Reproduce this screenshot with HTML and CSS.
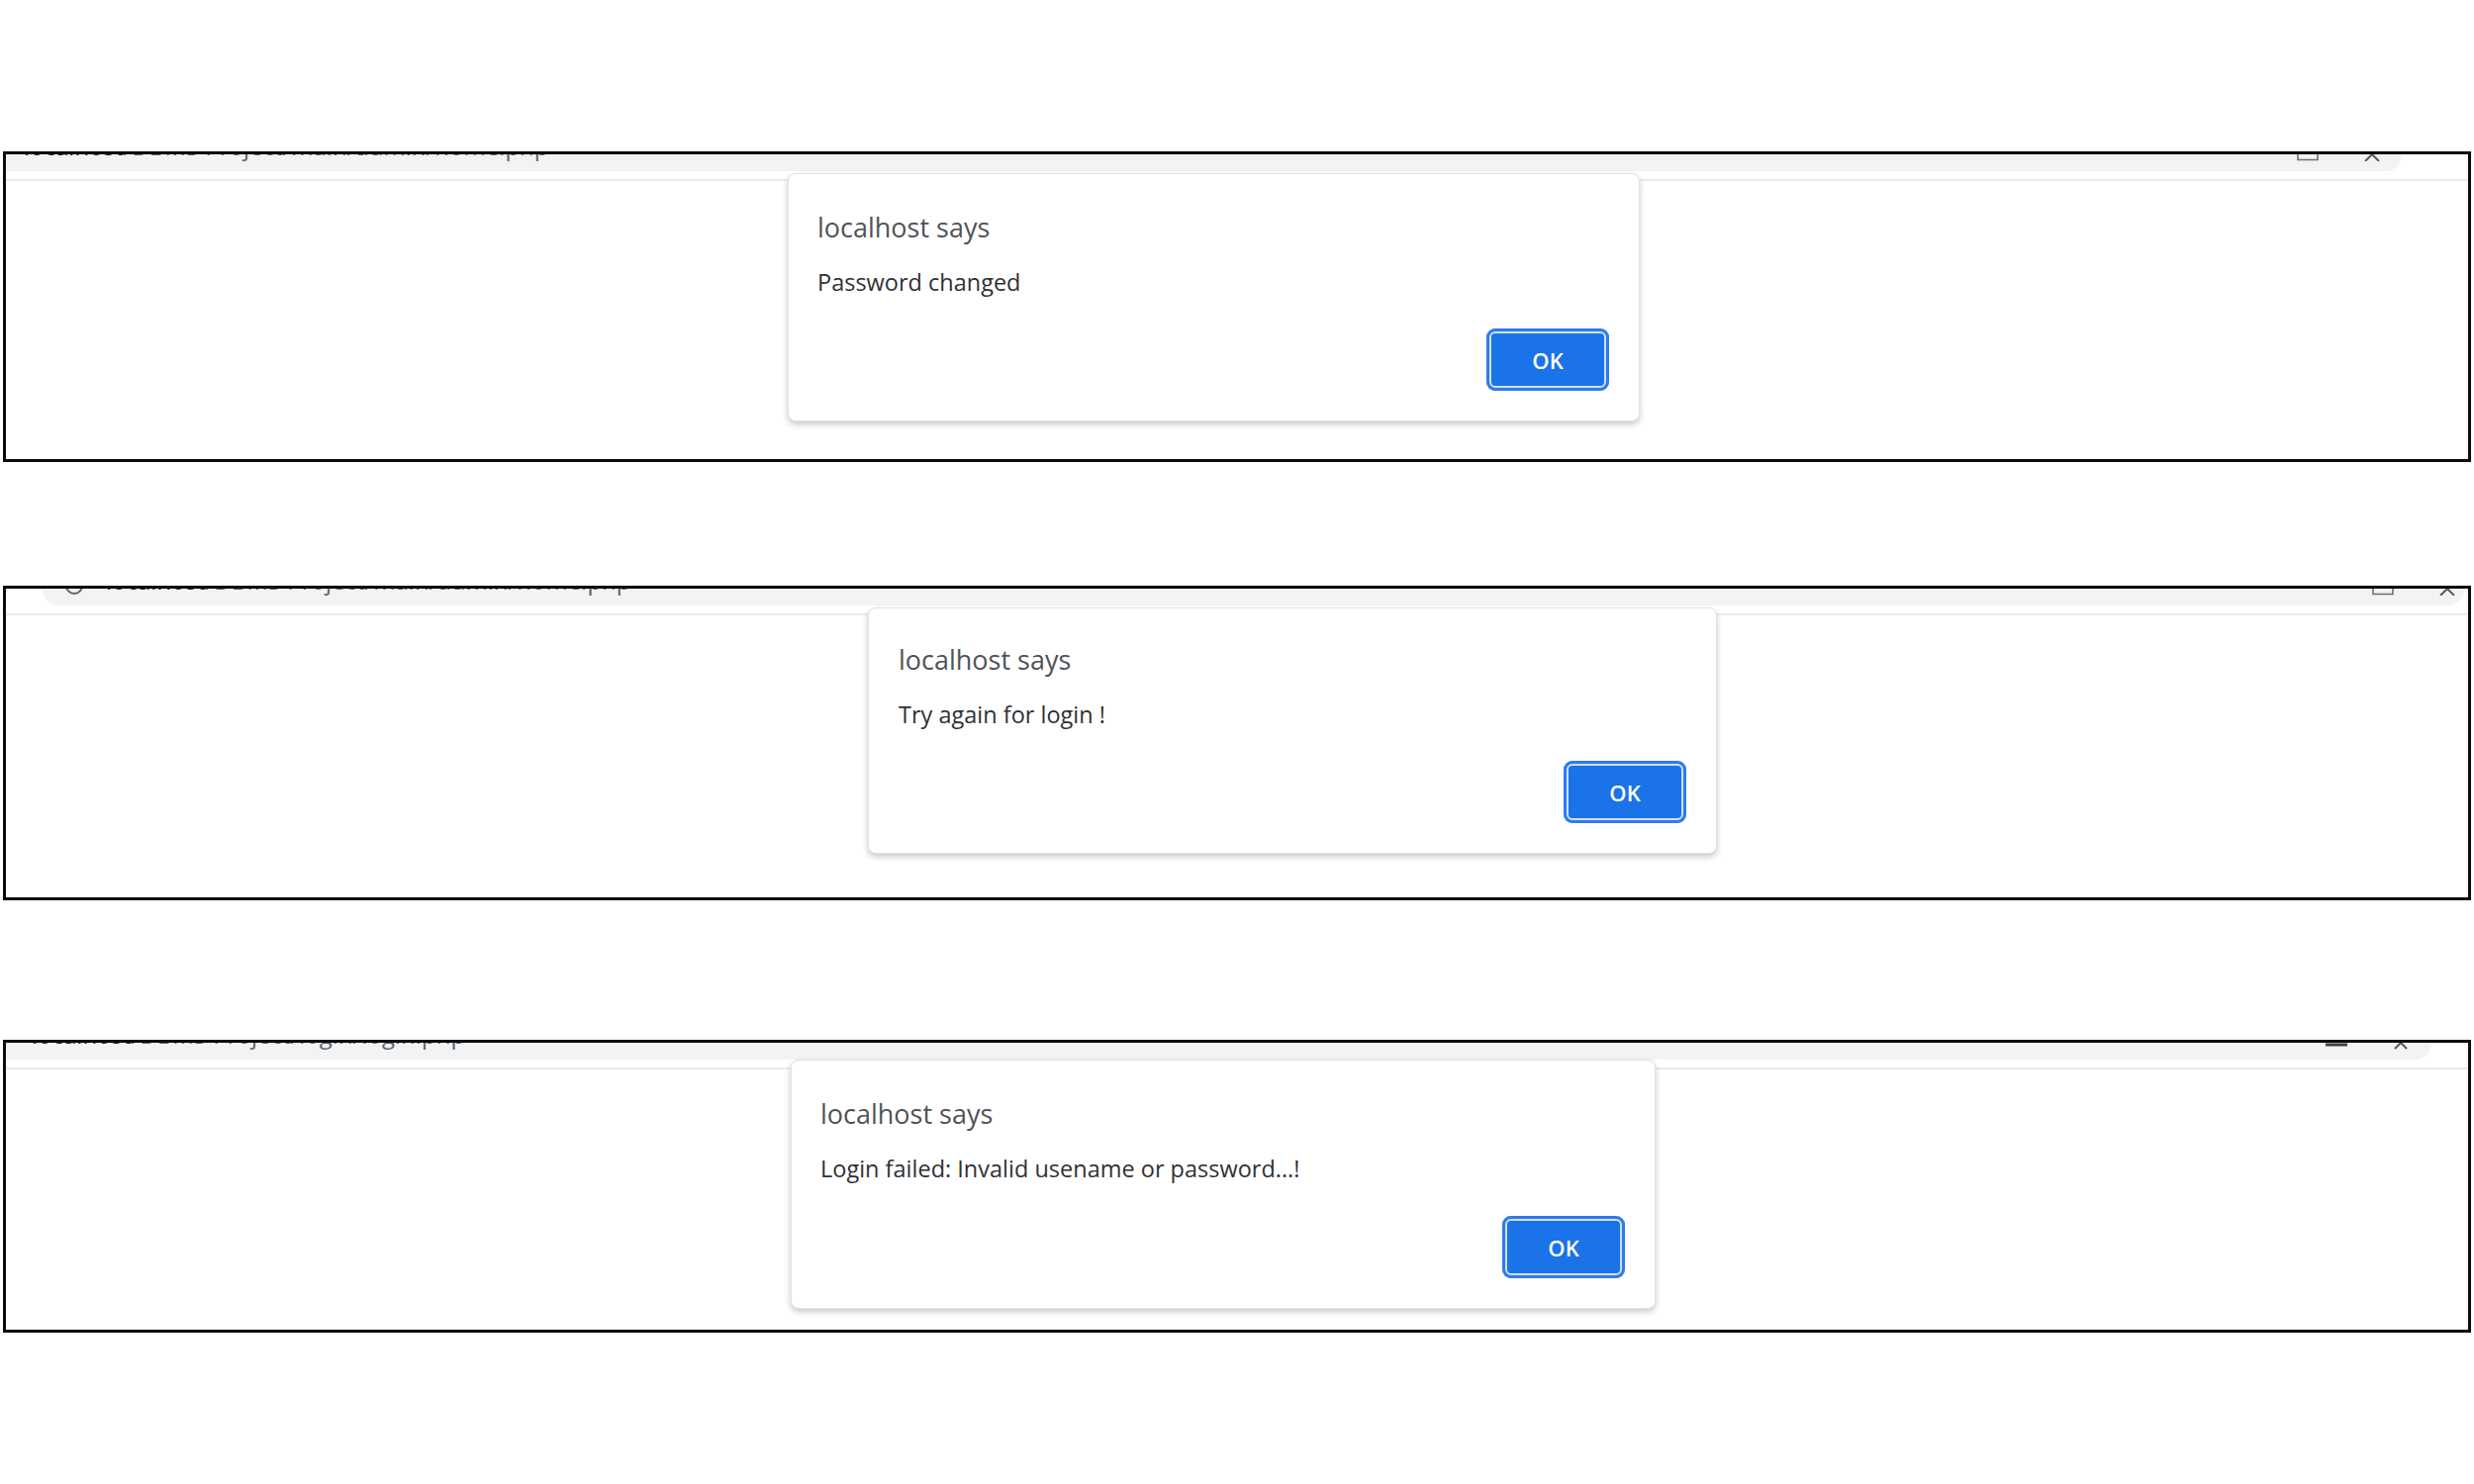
FILE: index.html
```html
<!DOCTYPE html>
<html lang="en">
<head>
    <meta charset="UTF-8">
    <meta name="viewport" content="width=device-width, initial-scale=1.0">
    <title>Alerts</title>
    <link rel="stylesheet" href="styles.css">
</head>
<body>
    <main class="sheet">
        <!-- first capture: password changed -->
        <section class="shot shot-one">
            <div class="toolbar">
                <div class="omnibox">
                    <span class="url"><span class="host">localhost</span>/DBMS Project/main/admin/home.php</span>
                    <span class="controls">
                        <svg class="ctl" width="22" height="7" viewBox="0 0 22 7"><path d="M1 0V5.5H21V0" fill="none" stroke="#6b6f73" stroke-width="1.6"/></svg>
                        <svg class="ctl" width="20" height="7" viewBox="0 0 20 7"><path d="M10 0L3 7M10 0L17 7" fill="none" stroke="#55595d" stroke-width="2"/></svg>
                    </span>
                </div>
            </div>
            <div class="dialog">
                <p class="dialog-title">localhost says</p>
                <p class="dialog-msg">Password changed</p>
                <div class="dialog-actions"><button class="ok">OK</button></div>
            </div>
        </section>

        <!-- second capture: try again -->
        <section class="shot shot-two">
            <div class="toolbar">
                <div class="omnibox">
                    <svg class="info" width="20" height="7" viewBox="0 0 20 7"><circle cx="10" cy="-3" r="8" fill="none" stroke="#5f6368" stroke-width="2"/></svg>
                    <span class="url"><span class="host">localhost</span>/DBMS Project/main/admin/home.php</span>
                    <span class="controls">
                        <svg class="ctl" width="22" height="7" viewBox="0 0 22 7"><path d="M1 0V5.5H21V0" fill="none" stroke="#6b6f73" stroke-width="1.6"/></svg>
                        <svg class="ctl" width="20" height="7" viewBox="0 0 20 7"><path d="M10 0L3 7M10 0L17 7" fill="none" stroke="#55595d" stroke-width="2"/></svg>
                    </span>
                </div>
            </div>
            <div class="dialog">
                <p class="dialog-title">localhost says</p>
                <p class="dialog-msg">Try again for login !</p>
                <div class="dialog-actions"><button class="ok">OK</button></div>
            </div>
        </section>

        <!-- third capture: login failed -->
        <section class="shot shot-three">
            <div class="toolbar">
                <div class="omnibox">
                    <span class="url"><span class="host">localhost</span>/DBMS Project/login/login.php</span>
                    <span class="controls">
                        <svg class="ctl" width="24" height="7" viewBox="0 0 24 7"><path d="M1 2H23" fill="none" stroke="#3c4043" stroke-width="3"/></svg>
                        <svg class="ctl" width="18" height="7" viewBox="0 0 18 7"><path d="M9 0L3 6M9 0L15 6" fill="none" stroke="#55595d" stroke-width="2"/></svg>
                    </span>
                </div>
            </div>
            <div class="dialog">
                <p class="dialog-title">localhost says</p>
                <p class="dialog-msg">Login failed: Invalid usename or password...!</p>
                <div class="dialog-actions"><button class="ok">OK</button></div>
            </div>
        </section>
    </main>
</body>
</html>
```

FILE: styles.css
```css
body {
    margin: 0;
    background-color: #fff;
    font-family: "Open Sans", "Noto Sans", sans-serif;
}

.sheet {
    display: flex;
    flex-direction: column;
    padding-top: 153px;
}

.shot {
    box-sizing: border-box;
    width: 2494px;
    margin-left: 3px;
    border: 3px solid #0c0c0c;
    padding-bottom: 38px;
}

.shot-two {
    margin-top: 125px;
    padding-bottom: 44px;
}

.shot-three {
    margin-top: 141px;
    padding-bottom: 21px;
}

/* browser chrome cut off at the top of each capture */
.toolbar {
    height: 25px;
    border-bottom: 2px solid #e9eaeb;
    display: flex;
}

.omnibox {
    flex: 1;
    height: 17px;
    display: flex;
    align-items: flex-start;
    overflow: hidden;
    background-color: #f1f3f4;
    border-radius: 0 0 16px 0;
    padding-left: 18px;
    margin-right: 67px;
}

.shot-two .omnibox {
    margin-left: 37px;
    margin-right: 4px;
    padding-left: 22px;
    border-radius: 0 0 16px 16px;
}

.shot-three .omnibox {
    margin-right: 37px;
    padding-left: 26px;
}

.url {
    margin-top: -20px;
    font-size: 24px;
    line-height: 24px;
    white-space: nowrap;
    color: #5f6368;
}

.host {
    color: #202124;
}

.info {
    margin-right: 22px;
}

.controls {
    margin-left: auto;
    display: flex;
    gap: 44px;
    padding-right: 20px;
}

.shot-two .controls {
    padding-right: 7px;
}

.shot-three .controls {
    padding-right: 22px;
}

.ctl {
    display: block;
}

/* the alert box */
.dialog {
    position: relative;
    box-sizing: border-box;
    width: 861px;
    margin-top: -8px;
    margin-left: 790px;
    padding: 35px 30px 30px 29px;
    background-color: #fff;
    border: 1px solid #e3e3e3;
    border-radius: 8px;
    box-shadow: 0 3px 6px rgba(0, 0, 0, 0.22);
}

.shot-two .dialog {
    width: 858px;
    margin-left: 871px;
    padding-top: 33px;
    padding-left: 30px;
}

.shot-three .dialog {
    width: 874px;
    margin-top: -10px;
    margin-left: 793px;
}

.dialog-title {
    margin: 0;
    font-size: 27px;
    line-height: 38px;
    color: #505357;
}

.dialog-msg {
    margin: 20px 0 0;
    font-size: 23.5px;
    line-height: 32px;
    color: #303134;
}

.dialog-actions {
    display: flex;
    justify-content: flex-end;
    margin-top: 31px;
}

.shot-three .dialog-actions {
    margin-top: 32px;
}

.ok {
    width: 124px;
    height: 63px;
    border: none;
    border-radius: 9px;
    background-color: #1a73e8;
    color: #fff;
    font-family: "Open Sans", "Noto Sans", sans-serif;
    font-size: 22px;
    font-weight: 600;
    box-shadow: inset 0 0 0 3px #2f7bec, inset 0 0 0 5px #cfe0fb;
}
```
